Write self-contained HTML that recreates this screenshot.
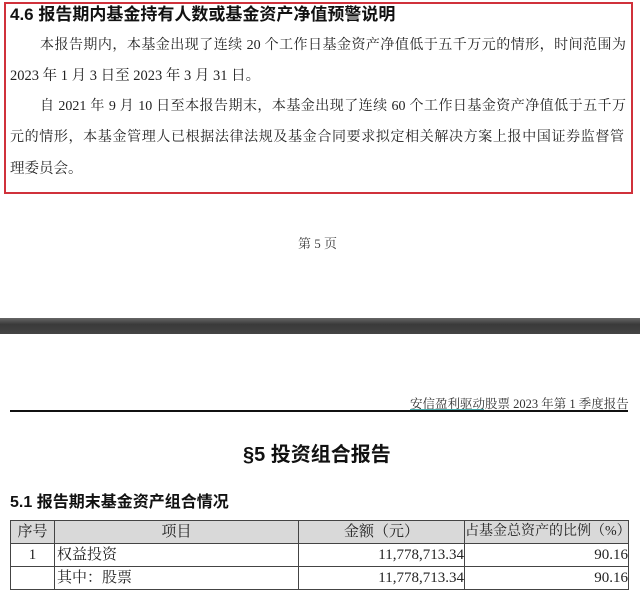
<!DOCTYPE html>
<html><head><meta charset="utf-8"><style>
body{margin:0;width:640px;height:590px;background:#fff;position:relative;overflow:hidden;font-family:"Liberation Serif","Noto Serif CJK SC",serif;color:#222}
.a{position:absolute;white-space:nowrap}
.j{position:absolute;text-align:justify;text-align-last:justify;white-space:nowrap;font-size:14px;line-height:20px}
.b{font-family:"Liberation Sans","Noto Sans CJK SC",sans-serif;font-weight:bold;color:#111}
table{position:absolute;left:10px;top:520px;border-collapse:collapse;font-size:15px;table-layout:fixed;width:618px}
td{border:1px solid #444;height:22px;padding:0 2px;line-height:20px;overflow:hidden;white-space:nowrap}
</style></head><body>
<div class="a" style="left:4px;top:2px;width:625px;height:188px;border:2px solid #d0313b"></div>
<div class="a b" style="left:10px;top:4px;font-size:17px;line-height:22px">4.6 报告期内基金持有人数或基金资产净值预警说明</div>
<div class="j" style="left:40px;top:36px;width:586px">本报告期内，本基金出现了连续 20 个工作日基金资产净值低于五千万元的情形，时间范围为</div>
<div class="a" style="left:10px;top:66px;font-size:14.5px;line-height:20px">2023 年 1 月 3 日至 2023 年 3 月 31 日。</div>
<div class="j" style="left:40px;top:97px;width:586px">自 2021 年 9 月 10 日至本报告期末，本基金出现了连续 60 个工作日基金资产净值低于五千万</div>
<div class="j" style="left:10px;top:128px;width:614px">元的情形，本基金管理人已根据法律法规及基金合同要求拟定相关解决方案上报中国证券监督管</div>
<div class="a" style="left:10px;top:159px;font-size:14.5px;line-height:20px">理委员会。</div>
<div class="a" style="left:298px;top:233px;font-size:13px;color:#444">第 5 页</div>
<div class="a" style="left:0;top:318px;width:640px;height:16px;background:linear-gradient(#666,#3a3a3a 40%,#444)"></div>
<div class="a" style="left:410px;top:394px;font-size:12.5px;color:#333">安信盈利驱动股票 2023 年第 1 季度报告</div>
<div class="a" style="left:410px;top:409px;width:74px;height:1px;background:#4aa"></div>
<div class="a" style="left:10px;top:410px;width:618px;height:2px;background:#111"></div>
<div class="a b" style="left:243px;top:443px;font-size:20px;line-height:24px">§5 投资组合报告</div>
<div class="a b" style="left:10px;top:493px;font-size:16px;line-height:20px">5.1 报告期末基金资产组合情况</div>
<table>
<colgroup><col style="width:44px"><col style="width:244px"><col style="width:166px"><col style="width:164px"></colgroup>
<tr style="background:#d9d9d9"><td style="text-align:center">序号</td><td style="text-align:center">项目</td><td style="text-align:center">金额（元）</td><td style="text-align:center;padding:0;font-size:14px">占基金总资产的比例（%）</td></tr>
<tr><td style="text-align:center">1</td><td>权益投资</td><td style="text-align:right;padding:0">11,778,713.34</td><td style="text-align:right;padding:0">90.16</td></tr>
<tr><td></td><td>其中：股票</td><td style="text-align:right;padding:0">11,778,713.34</td><td style="text-align:right;padding:0">90.16</td></tr>
</table>
</body></html>
